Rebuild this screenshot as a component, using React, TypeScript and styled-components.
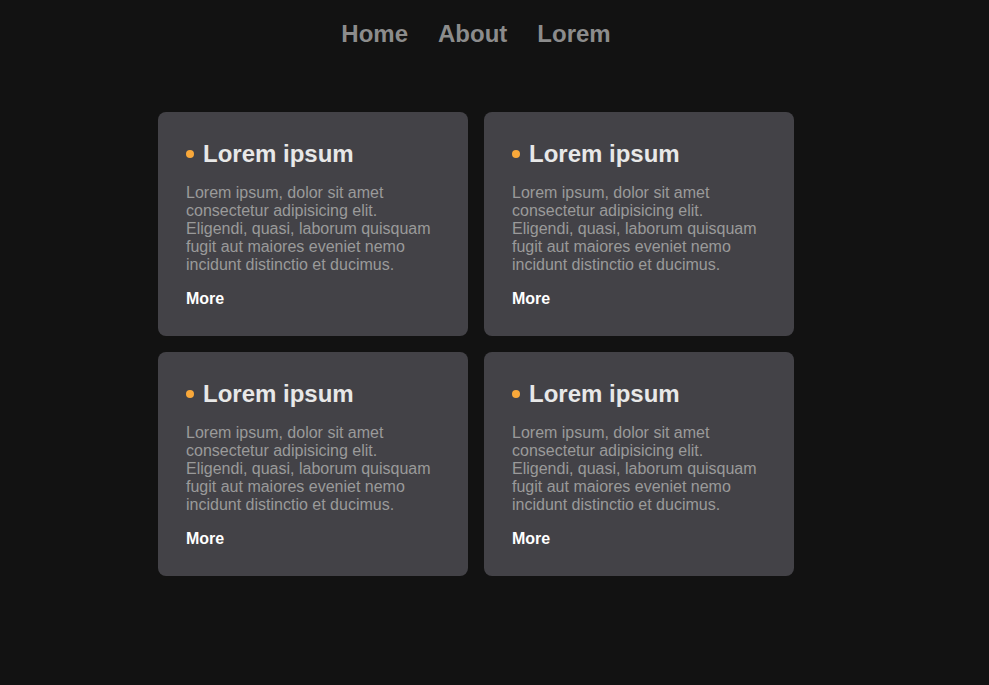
import React from 'react'
import styled, { createGlobalStyle } from 'styled-components'

const GlobalStyle = createGlobalStyle`
  html, body {
    margin: 0;
    padding: 0;
    background-color: #121212;
    font-family: 'Liberation Sans', Arial, sans-serif;
  }
`

const links = ['Home', 'About', 'Lorem']

const body =
  'Lorem ipsum, dolor sit amet consectetur adipisicing elit. Eligendi, quasi, laborum quisquam fugit aut maiores eveniet nemo incidunt distinctio et ducimus.'

const cards = [1, 2, 3, 4]

const App: React.FC = () => {
  return (
    <>
      <GlobalStyle />
      <Page>
        <Nav>
          {links.map((l) => (
            <NavLink key={l} href="#">
              {l}
            </NavLink>
          ))}
        </Nav>
        <Grid>
          {cards.map((c) => (
            <Card key={c}>
              <Title>
                <Dot />
                Lorem ipsum
              </Title>
              <Text>{body}</Text>
              <More href="#">More</More>
            </Card>
          ))}
        </Grid>
      </Page>
    </>
  )
}

export default App

const Page = styled.div`
  min-height: 685px;
  display: flex;
  flex-direction: column;
  align-items: center;
  padding-right: 37px;
  padding-top: 20px;
  box-sizing: border-box;
`

const Nav = styled.nav`
  display: flex;
  align-items: center;
  gap: 30px;
`

const NavLink = styled.a`
  color: #8c8c8c;
  font-size: 24px;
  font-weight: bold;
  text-decoration: none;
`

const Grid = styled.main`
  margin-top: 64px;
  display: grid;
  grid-template-columns: 310px 310px;
  gap: 16px;
`

const Card = styled.div`
  background-color: #434247;
  border-radius: 8px;
  padding: 28px 28px 30px;
  height: 224px;
  box-sizing: border-box;
`

const Title = styled.h2`
  margin: 0;
  display: flex;
  align-items: center;
  gap: 9px;
  color: #e8e8e8;
  font-size: 24px;
  font-weight: bold;
`

const Dot = styled.span`
  width: 8px;
  height: 8px;
  border-radius: 50%;
  background-color: #f9a83a;
`

const Text = styled.p`
  margin: 16px 0 0;
  color: #9a9a9a;
  font-size: 16px;
  line-height: 18px;
`

const More = styled.a`
  display: block;
  margin-top: 16px;
  color: #ffffff;
  font-size: 16px;
  font-weight: bold;
  line-height: 18px;
  text-decoration: none;
`
